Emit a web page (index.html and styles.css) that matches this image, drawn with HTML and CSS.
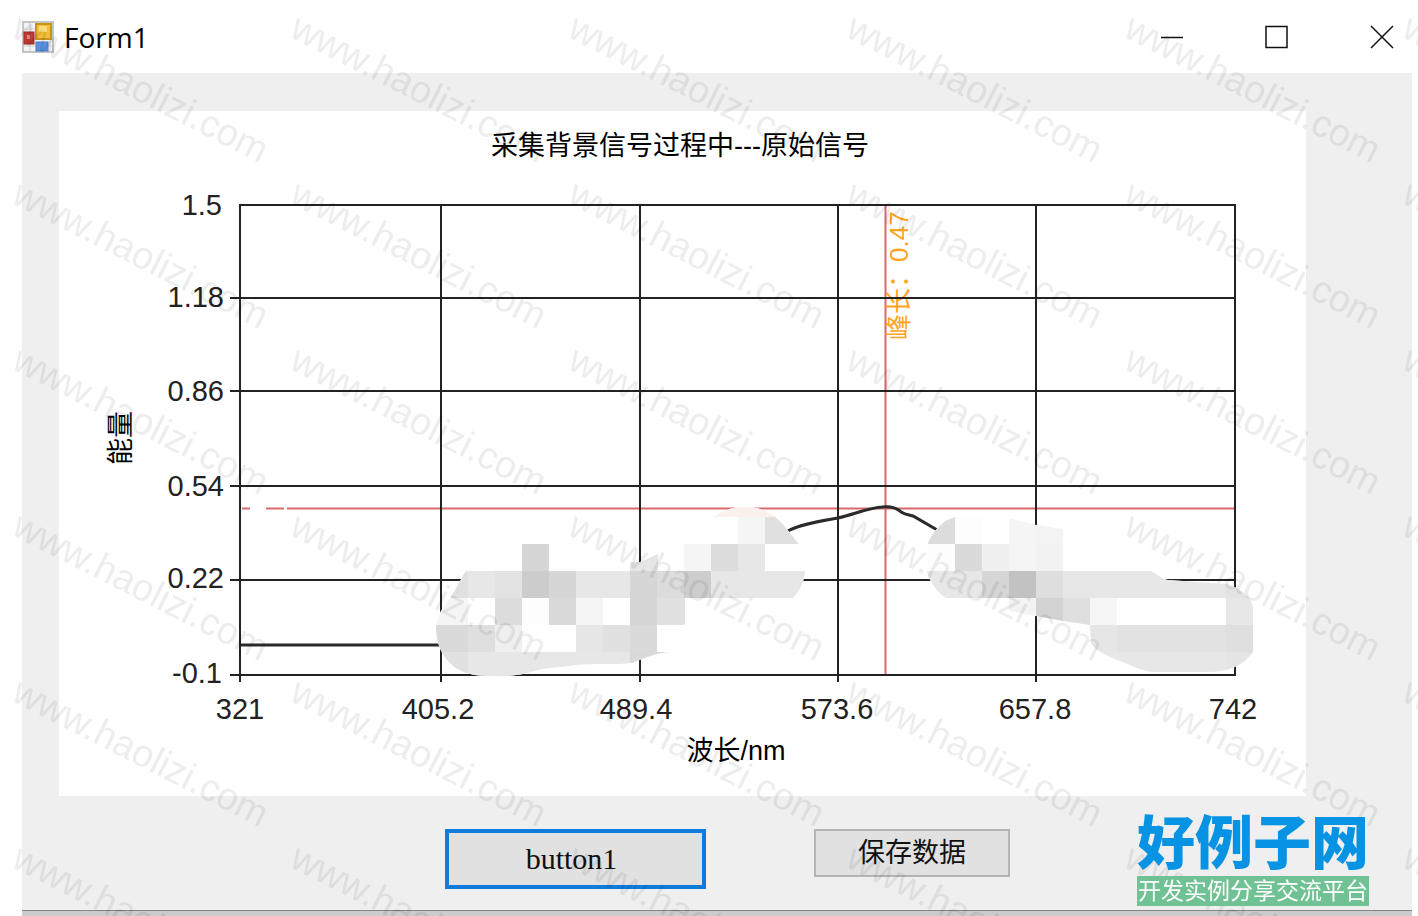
FILE: index.html
```
<!DOCTYPE html>
<html lang="zh-CN">
<head>
    <meta charset="utf-8">
    <title>Form1</title>
    <link rel="stylesheet" href="styles.css">
</head>

<body>
    <div class="window">
        <header class="title-bar">
            <svg class="app-icon" viewBox="0 0 32 32">
                <rect x="1" y="1" width="30" height="30" fill="#f4f4f4" stroke="#c4c4c4" stroke-width="2"/>
                <path d="M8 2v28M2 8h12M2 25h28M28 18v12" stroke="#d0d0d0" stroke-width="1"/>
                <rect x="14" y="3" width="15" height="15" fill="#f3bd35" stroke="#c8951c" stroke-width="2"/>
                <rect x="17" y="5" width="8" height="6" fill="#fbdc7c"/>
                <rect x="2" y="11" width="10" height="12" fill="#c23a32" stroke="#9c2a26" stroke-width="1"/>
                <rect x="5" y="14" width="3" height="4" fill="#e08a84"/>
                <rect x="14" y="21" width="12" height="9" fill="#5b92e0" stroke="#4479c8" stroke-width="1"/>
            </svg>
            <h1>Form1</h1>
            <div class="window-buttons">
                <button type="button" aria-label="Minimize">
                    <svg viewBox="0 0 22 22"><path d="M0 11.5h22"/></svg>
                </button>
                <button type="button" aria-label="Maximize">
                    <svg viewBox="0 0 22 22"><rect x="0" y="0.5" width="21" height="21"/></svg>
                </button>
                <button type="button" aria-label="Close">
                    <svg viewBox="0 0 22 22"><path d="M0 0l22 22M22 0L0 22"/></svg>
                </button>
            </div>
        </header>

        <main class="client">
            <!-- the viewBox starts at the panel's place in the form -->
            <svg class="chart" viewBox="59 111 1247 685">
                <defs>
                    <clipPath id="blob-left">
                        <path d="M467 569C460 580 454 593 449 600C440 610 436 620 436 630C437 645 442 656 452 665C461 673 474 676 490 676C512 677 525 674 538 670C550 667 565 667 575 665C595 663 615 665 632 663C645 658 655 653 671 652L684 625L711 598H793C800 591 804 582 805 571L798 543C790 533 782 522 775 517C760 504 732 503 714 517L685 544L658 554L640 562H630L576 544H522V571Z"/>
                    </clipPath>
                    <clipPath id="blob-right">
                        <path d="M928 543C934 529 944 520 955 517C965 515 975 515 985 516L1009 518L1036 525L1063 529V571H1151C1158 574 1161 579 1168 580L1226 584C1242 588 1253 600 1253 607V652C1243 666 1228 672 1208 672H1160C1145 673 1135 667 1120 661C1110 657 1095 651 1091 643L1090 625L1063 621L1036 616L1009 611L982 598H946C936 591 930 582 927 572Z"/>
                    </clipPath>
                </defs>

                <g class="cursor-line">
                    <path d="M242 508.500h8M266 508.500h18M287 508.500h948M885.500 205v470"/>
                </g>
                <g class="marker" transform="translate(908 340) rotate(-90)">
                    <text>峰长：0.47</text>
                </g>
                <g class="grid">
                    <path d="M240 205H1236M230 298H1236M230 391H1236M230 486H1236M230 580H1236M230 675H1236"/>
                    <path d="M240 204V682M441 204V682M640 204V682M838 204V682M1036 204V682M1235 204V676"/>
                </g>
                <g class="series">
                    <path d="M241 645H445"/>
                    <path d="M786 532C800 524 822 521 838 518C855 514 868 508 882 507C890 506 897 508 901 512C906 515 910 515 913 516L939 531"/>
                </g>
                <g id="mosaic-left" clip-path="url(#blob-left)"></g>
                <g id="mosaic-right" clip-path="url(#blob-right)"></g>

                <text class="caption" x="680" y="155">采集背景信号过程中---原始信号</text>
                <text class="caption" x="736" y="760">波长/nm</text>
                <text class="caption" transform="translate(130 438) rotate(-90)">能量</text>

                <g class="y-labels">
                    <text x="222" y="215">1.5</text>
                    <text x="224" y="307">1.18</text>
                    <text x="224" y="401">0.86</text>
                    <text x="224" y="496">0.54</text>
                    <text x="224" y="588">0.22</text>
                    <text x="222" y="683">-0.1</text>
                </g>
                <g class="x-labels">
                    <text x="240" y="719">321</text>
                    <text x="438" y="719">405.2</text>
                    <text x="636" y="719">489.4</text>
                    <text x="837" y="719">573.6</text>
                    <text x="1035" y="719">657.8</text>
                    <text x="1233" y="719">742</text>
                </g>
            </svg>

            <div class="actions">
                <button type="button" class="form-button focused">button1</button>
                <button type="button" class="form-button">保存数据</button>
                <div class="site-logo">
                    <strong>好例子网</strong>
                    <span>开发实例分享交流平台</span>
                </div>
            </div>
        </main>
    </div>

    <svg class="watermark" aria-hidden="true">
        <defs>
            <pattern id="mark" x="6" y="12" width="278" height="166" patternUnits="userSpaceOnUse">
                <text transform="translate(4 24) rotate(27)">www.haolizi.com</text>
            </pattern>
        </defs>
        <rect width="100%" height="100%" fill="url(#mark)"/>
    </svg>

    <script>
        // each cell: x, y, width, colour
        const left = [
            [711, 490, 94, '#fbf0ee'],
            [738, 517, 27, '#f5f5f5'], [765, 517, 40, '#e0e0e0'],
            [522, 544, 27, '#d6d6d6'], [549, 544, 27, '#fefefe'], [630, 544, 28, '#e6e6e6'],
            [684, 544, 27, '#f5f5f5'], [711, 544, 27, '#dcdcdc'], [738, 544, 27, '#e7e7e7'],
            [436, 571, 32, '#e0e0e0'], [468, 571, 27, '#e7e7e7'], [495, 571, 27, '#e3e3e3'],
            [522, 571, 27, '#cccccc'], [549, 571, 27, '#d6d6d6'], [576, 571, 54, '#e7e7e7'],
            [630, 571, 27, '#d6d6d6'], [657, 571, 27, '#dcdcdc'], [684, 571, 27, '#cdcdcd'],
            [711, 571, 94, '#e7e7e7'],
            [436, 598, 32, '#f5f5f5'], [495, 598, 27, '#dcdcdc'], [522, 598, 27, '#fdfdfd'],
            [549, 598, 27, '#d9d9d9'], [576, 598, 27, '#f5f5f5'], [630, 598, 27, '#d6d6d6'],
            [657, 598, 28, '#e0e0e0'],
            [436, 625, 32, '#dadada'], [468, 625, 27, '#dfdfdf'], [495, 625, 27, '#efefef'],
            [576, 625, 27, '#e6e6e6'], [603, 625, 27, '#e1e1e1'], [630, 625, 27, '#dadada'],
            [436, 652, 32, '#e1e1e1'], [468, 652, 162, '#e7e7e7'], [630, 652, 42, '#d9d9d9']
        ];
        const right = [
            [927, 517, 28, '#dcdcdc'], [955, 517, 27, '#fdfdfd'], [1009, 517, 27, '#f5f5f5'],
            [1036, 517, 27, '#f3f3f3'],
            [927, 544, 28, '#fdfdfd'], [955, 544, 27, '#dadada'], [982, 544, 27, '#f0f0f0'],
            [1009, 544, 27, '#f5f5f5'], [1036, 544, 27, '#f2f2f2'],
            [927, 571, 55, '#e7e7e7'], [982, 571, 27, '#d6d6d6'], [1009, 571, 27, '#c2c2c2'],
            [1036, 571, 27, '#dedede'], [1063, 571, 163, '#e7e7e7'], [1226, 571, 27, '#e3e3e3'],
            [1009, 598, 27, '#f3f3f3'], [1036, 598, 27, '#d2d2d2'], [1063, 598, 27, '#dfdfdf'],
            [1090, 598, 27, '#f6f6f6'], [1226, 598, 27, '#e7e7e7'],
            [1090, 625, 27, '#e6e6e6'], [1117, 625, 109, '#e2e2e2'], [1226, 625, 27, '#dfdfdf'],
            [1090, 652, 136, '#e7e7e7'], [1226, 652, 27, '#e5e5e5']
        ];

        function addCell(group, x, y, width, height, color) {
            const cell = document.createElementNS('http://www.w3.org/2000/svg', 'rect');
            cell.setAttribute('x', x);
            cell.setAttribute('y', y);
            cell.setAttribute('width', width);
            cell.setAttribute('height', height);
            cell.setAttribute('fill', color);
            group.appendChild(cell);
        }

        function drawMosaic(id, cells) {
            const group = document.getElementById(id);
            addCell(group, 430, 500, 830, 180, '#ffffff');
            cells.forEach(function (c) {
                addCell(group, c[0], c[1], c[2], 27, c[3]);
            });
        }

        drawMosaic('mosaic-left', left);
        drawMosaic('mosaic-right', right);
    </script>
</body>
</html>
```
FILE: styles.css
```
* {
    box-sizing: border-box;
}

body {
    margin: 0;
    background: #ffffff;
    font-family: 'Liberation Sans', 'Noto Sans CJK SC', sans-serif;
    color: #111111;
}

.window {
    display: flex;
    flex-direction: column;
    min-height: 100vh;
    margin: 0 6px 0 22px;
}

.title-bar {
    display: flex;
    align-items: center;
    height: 73px;
    padding-right: 19px;
}

.app-icon {
    width: 32px;
    height: 32px;
}

h1 {
    margin: 0 0 0 10px;
    font-family: 'Open Sans', 'Noto Sans', sans-serif;
    font-size: 28px;
    font-weight: normal;
    color: #000000;
}

.window-buttons {
    display: flex;
    gap: 83px;
    margin-left: auto;
}

.window-buttons button {
    width: 22px;
    height: 22px;
    padding: 0;
    border: 0;
    background: none;
}

.window-buttons svg {
    display: block;
    width: 22px;
    height: 22px;
    fill: none;
    stroke: #111111;
    stroke-width: 1.5;
    overflow: visible;
}

.client {
    flex: 1;
    padding-top: 38px;
    background: #efefef;
    border-bottom: 5px solid #cccccc;
    box-shadow: inset 0 -1px #858585;
}

.chart {
    display: block;
    width: calc(100% - 143px);
    margin-left: 37px;
    background: #ffffff;
}

.grid path {
    fill: none;
    stroke: #222222;
    stroke-width: 2;
}

.series path {
    fill: none;
    stroke: #2a2a2a;
    stroke-width: 3;
}

.cursor-line path {
    fill: none;
    stroke: #d96a6a;
    stroke-width: 2;
}

.marker {
    font-size: 26px;
    fill: #ffa51f;
}

.caption {
    font-size: 27px;
    text-anchor: middle;
}

.y-labels {
    font-size: 29px;
    fill: #222222;
    text-anchor: end;
}

.x-labels {
    font-size: 29px;
    fill: #222222;
    text-anchor: middle;
}

.actions {
    display: flex;
    align-items: flex-start;
    padding: 16px 43px 0 423px;
}

.form-button {
    width: 196px;
    height: 48px;
    margin: 17px 108px 0 0;
    padding: 0;
    border: 2px solid #b4b4b4;
    background: #e1e1e1;
    color: #111111;
    font-family: 'Liberation Serif', 'Noto Sans CJK SC', serif;
    font-size: 27px;
    line-height: 40px;
}

.focused {
    width: 261px;
    height: 60px;
    padding-right: 8px;
    border: 4px solid #0f7bdb;
    font-size: 30px;
}

.site-logo {
    position: relative;
    z-index: 2;
    width: 232px;
    margin-left: auto;
    white-space: nowrap;
}

.site-logo strong {
    display: block;
    font-size: 58px;
    font-weight: 900;
    line-height: 64px;
    color: #0693e3;
}

.site-logo span {
    display: block;
    font-size: 23px;
    line-height: 30px;
    text-align: center;
    color: #ffffff;
    background: #70c294;
}

.watermark {
    position: fixed;
    top: 0;
    left: 0;
    width: 100%;
    height: 100%;
    pointer-events: none;
}

.watermark text {
    font-family: 'Liberation Sans', sans-serif;
    font-size: 38px;
    fill: #000000;
    fill-opacity: 0.07;
}
```
